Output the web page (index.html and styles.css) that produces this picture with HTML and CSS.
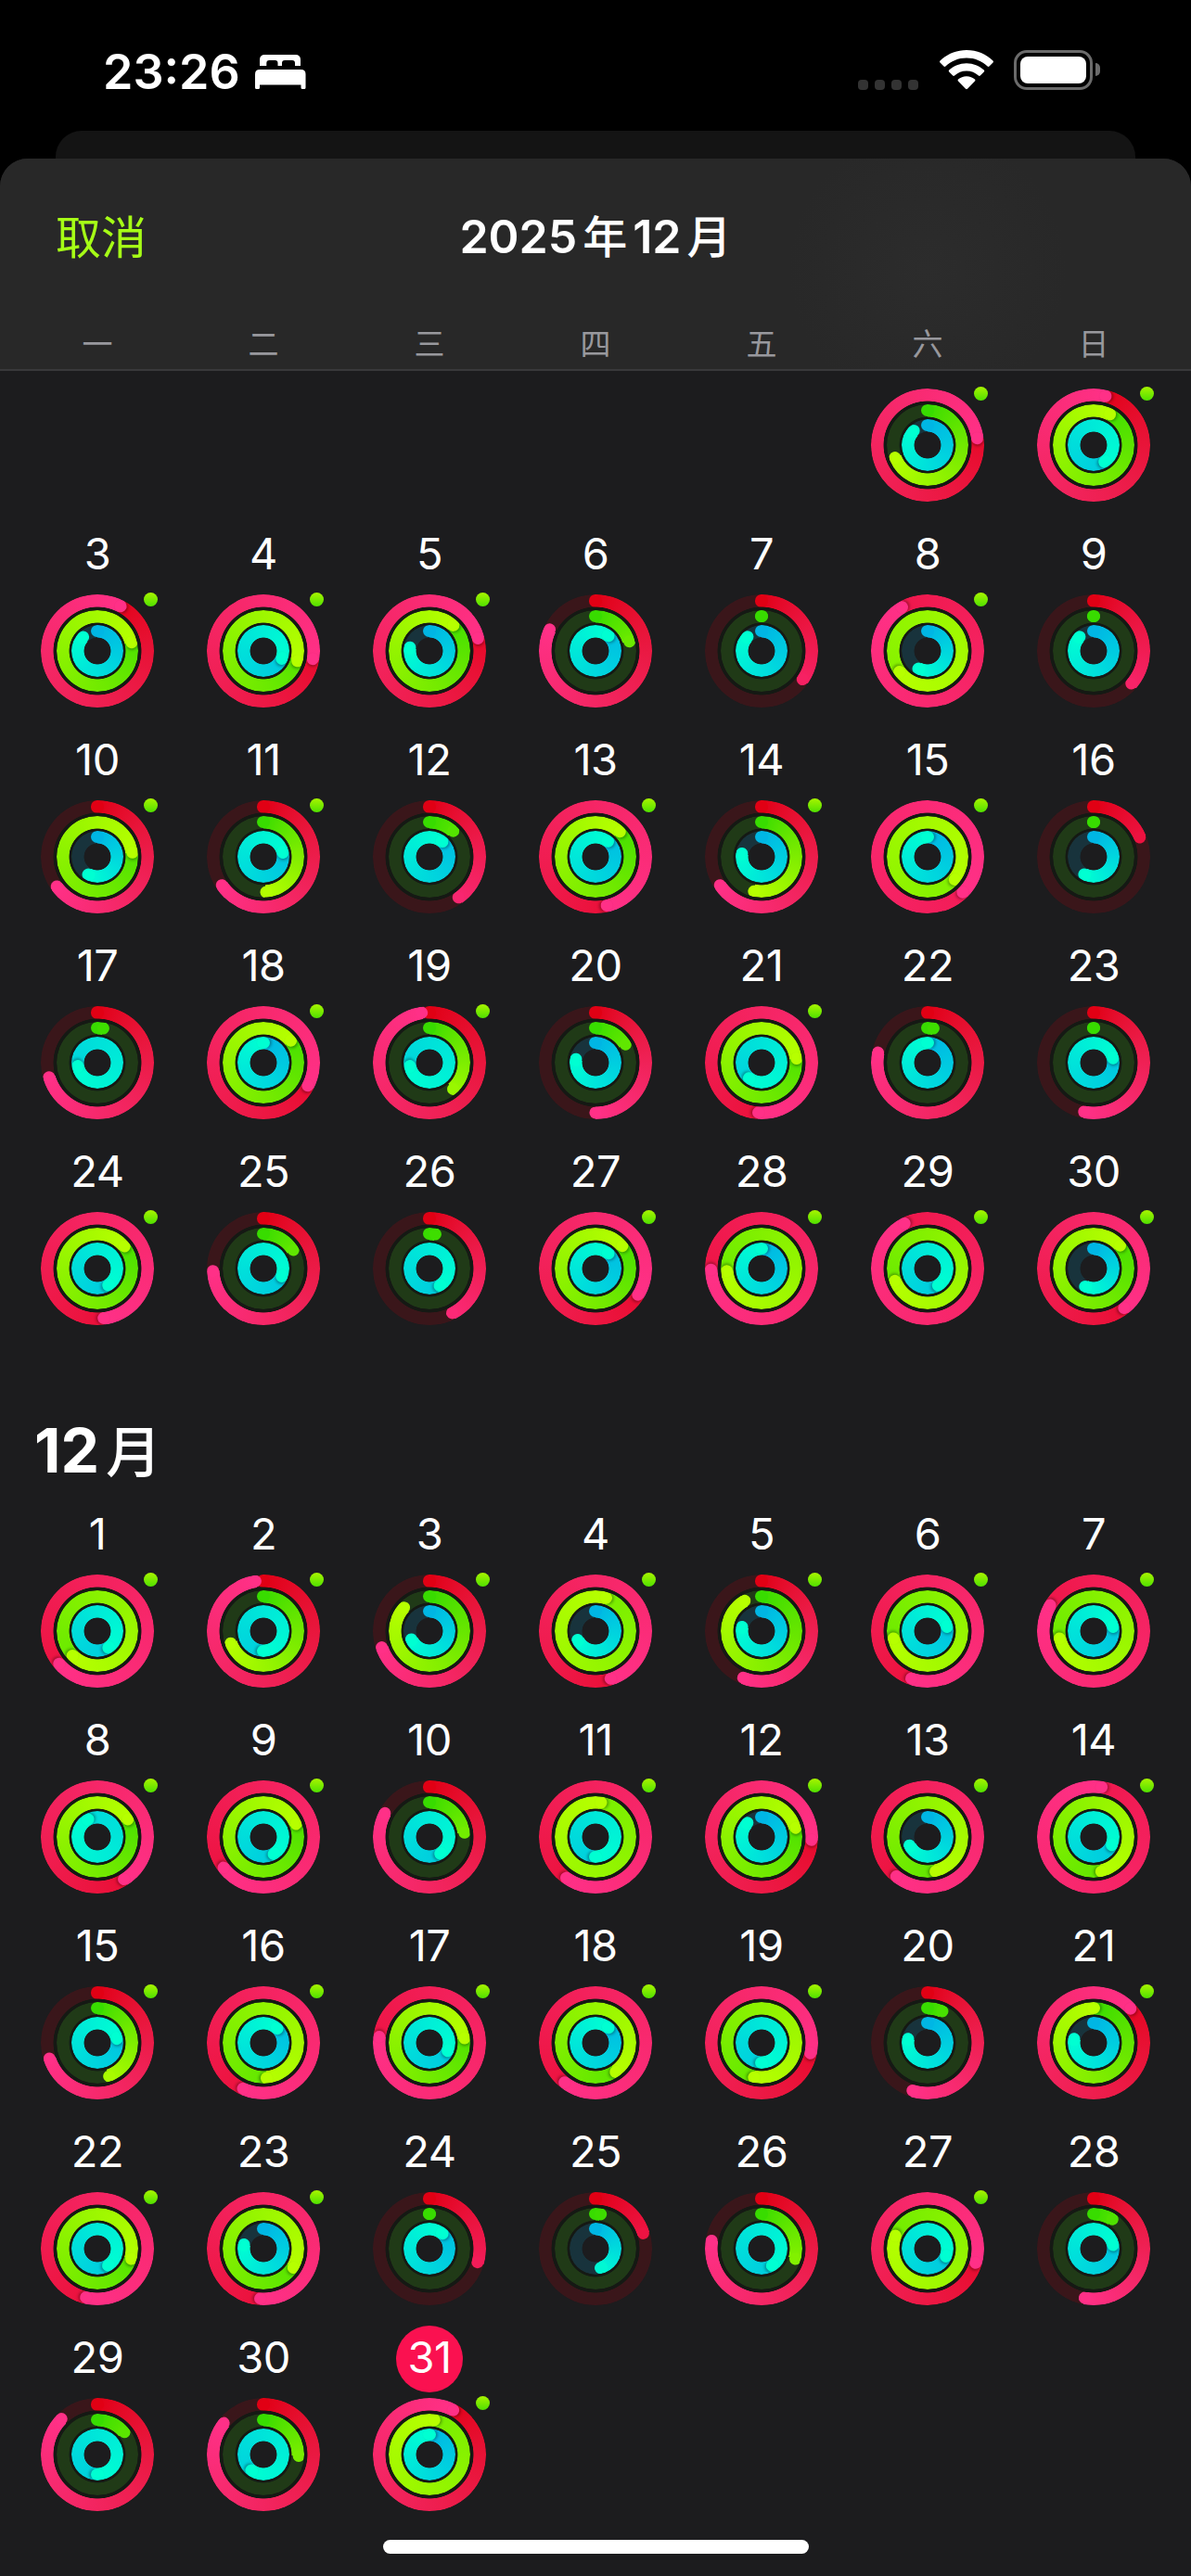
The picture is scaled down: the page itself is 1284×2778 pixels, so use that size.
FILE: index.html
```html
<!DOCTYPE html>
<html lang="zh-CN">
<head>
    <meta charset="UTF-8">
    <meta name="viewport" content="width=device-width, initial-scale=1.0">
    <title>2025年12月</title>
    <link rel="stylesheet" href="styles.css">
</head>
<body>
    <div class="screen">
        <div class="status-bar">
            <div class="status-left">
                <span class="time">23:26</span>
                <svg class="bed" viewBox="0 0 55 37" width="55" height="37">
                    <path fill="#fff" d="M5 12V5.500Q5 0 10.500 0H43.500Q49 0 49 5.500V12H43V9Q43 6 40 6H32Q29 6 29 9V12H24.500V9Q24.500 6 21.500 6H15.300Q12.300 6 12.300 9V12Z"/>
                    <path fill="#fff" d="M0 21Q0 16 5 16H49.500Q54.500 16 54.500 21V35.500Q54.500 37 53 37H51Q49.500 37 49.500 35.500V32.500H5V35.500Q5 37 3.500 37H1.500Q0 37 0 35.500Z"/>
                </svg>
            </div>
            <div class="status-right">
                <div class="signal"><i></i><i></i><i></i><i></i></div>
                <svg class="wifi" viewBox="0 0 58 43" width="58" height="43">
                    <path fill="#fff" d="M29 0C40.200 0 50.400 4.400 57.500 11.600Q58.400 12.500 57.500 13.500L53.500 17.500Q52.600 18.400 51.600 17.500C45.700 11.900 37.800 8.500 29 8.500S12.300 11.900 6.400 17.500Q5.400 18.400 4.500 17.500L.500 13.500Q-.400 12.500 .500 11.600C7.600 4.400 17.800 0 29 0Z"/>
                    <path fill="#fff" d="M29 14.200C36.300 14.200 42.900 17 47.800 21.600Q48.800 22.600 47.800 23.600L43.800 27.600Q42.900 28.500 41.900 27.600C38.500 24.500 34 22.600 29 22.600S19.500 24.500 16.100 27.600Q15.100 28.500 14.200 27.600L10.200 23.600Q9.200 22.600 10.200 21.600C15.100 17 21.700 14.200 29 14.200Z"/>
                    <path fill="#fff" d="M29 28.200C32.500 28.200 35.600 29.500 38 31.600Q39 32.600 38 33.600L30 41.700Q29 42.600 28 41.700L20 33.600Q19 32.600 20 31.600C22.400 29.500 25.500 28.200 29 28.200Z"/>
                </svg>
                <div class="battery"><div class="battery-level"></div></div>
            </div>
        </div>
        <div class="back-card"></div>
        <div class="sheet">
            <div class="header">
                <div class="nav">
                    <span class="cancel">取消</span>
                    <h1 class="title">2025<b>年</b>12<b class="last">月</b></h1>
                </div>
                <div class="weekdays">
                    <span>一</span><span>二</span><span>三</span><span>四</span><span>五</span><span>六</span><span>日</span>
                </div>
            </div>
            <div class="month first" id="november"></div>
            <h2 class="month-title">12<b>月</b></h2>
            <div class="month" id="december"></div>
        </div>
        <div class="home-indicator"></div>
    </div>

    <script src="rings.js"></script>
</body>
</html>
```

FILE: styles.css
```css
* {
    box-sizing: border-box;
}
body {
    margin: 0;
    background-color: #000;
    color: #fff;
    font-family: Inter, "Noto Sans CJK SC", sans-serif;
}
.screen {
    position: relative;
    display: flex;
    flex-direction: column;
    width: 1284px;
    height: 2778px;
    overflow: hidden;
}

/* Status bar */
.status-bar {
    display: flex;
    justify-content: space-between;
    align-items: center;
    height: 141px;
    padding: 13px 97px 0 111px;
}
.status-left {
    display: flex;
    align-items: center;
    gap: 17px;
}
.time {
    width: 147px;
    font-size: 52px;
    font-weight: 600;
    white-space: nowrap;
}
.status-right {
    display: flex;
    align-items: flex-end;
    height: 43px;
    margin-bottom: 3px;
}
.signal {
    display: flex;
    gap: 7px;
    margin-right: 23px;
}
.signal i {
    width: 11px;
    height: 11px;
    border-radius: 4px;
    background-color: #333;
}
.wifi {
    margin-right: 22px;
}
.battery {
    position: relative;
    width: 85px;
    height: 43px;
    margin-right: 9px;
    padding: 4px;
    border: 3px solid #6b6b6b;
    border-radius: 14px;
}
.battery::after {
    content: "";
    position: absolute;
    left: 85px;
    top: 11px;
    width: 5px;
    height: 14px;
    border-radius: 0 5px 5px 0;
    background-color: #6b6b6b;
}
.battery-level {
    height: 100%;
    border-radius: 8px;
    background-color: #fff;
}

/* Sheet */
.back-card {
    height: 30px;
    margin: 0 60px;
    border-radius: 28px 28px 0 0;
    background-color: #141414;
}
.sheet {
    flex: 1;
    border-radius: 30px 30px 0 0;
    background-color: #1c1c1e;
    overflow: hidden;
}
.header {
    height: 229px;
    border-bottom: 2px solid #39393b;
    background: radial-gradient(circle at 1000px 120px, #2c2c2c 0, #282828 150px);
}
.nav {
    display: grid;
    grid-template-columns: 1fr auto 1fr;
    align-items: center;
    height: 168px;
    padding: 0 60px;
}
.cancel {
    padding-bottom: 6px;
    color: #a6ff16;
    font-size: 49px;
}
.title {
    margin: 0;
    font-size: 50px;
    font-weight: 600;
    line-height: 60px;
    white-space: nowrap;
}
.title b {
    margin: 0 6px;
    font-size: 48px;
    font-weight: 500;
}
.title .last {
    margin-right: 0;
}
.weekdays {
    display: grid;
    grid-template-columns: repeat(7, 179px);
    justify-content: center;
    height: 60px;
    line-height: 65px;
    color: #98989d;
    font-size: 33px;
    text-align: center;
}

/* Months */
.month {
    display: grid;
    grid-template-columns: repeat(7, 179px);
    justify-content: center;
    row-gap: 22px;
}
.first {
    padding-top: 19px;
}
.month-title {
    height: 80px;
    margin: 95px 37px 16px;
    font-size: 66px;
    font-weight: 700;
    line-height: 80px;
}
.month-title b {
    margin-left: 7px;
    font-size: 60px;
    font-weight: 500;
    line-height: 1;
}
.day {
    display: flex;
    flex-direction: column;
    align-items: center;
    gap: 6px;
}
.day-number {
    width: 72px;
    height: 72px;
    font-size: 47px;
    line-height: 68px;
    letter-spacing: -0.5px;
    text-align: center;
}
.today {
    border-radius: 50%;
    background-color: #fa1150;
}

/* Activity rings */
.rings {
    position: relative;
    width: 122px;
    height: 122px;
    background: radial-gradient(circle, transparent 22px, #151914 23px, #151914 50px, transparent 51px);
}
.ring {
    position: absolute;
    inset: var(--inset);
    border-radius: 50%;
    overflow: hidden;
    -webkit-mask: radial-gradient(closest-side, transparent calc(100% - 13.9px), #000 calc(100% - 13.2px));
    mask: radial-gradient(closest-side, transparent calc(100% - 13.9px), #000 calc(100% - 13.2px));
}
.move {
    --inset: 0.3px;
    --start: #e10014;
    --end: #ff3087;
    --track: #3a161a;
}
.exercise {
    --inset: 16.7px;
    --start: #38dc00;
    --end: #b6ff00;
    --track: #203a17;
}
.stand {
    --inset: 33px;
    --start: #00b6e4;
    --end: #00ffd2;
    --track: #18333c;
}
.cap {
    position: absolute;
    inset: 0;
}
.cap::before {
    content: "";
    position: absolute;
    left: calc(50% - 6.7px);
    top: 0;
    width: 13.4px;
    height: 13.4px;
    border-radius: 50%;
    background-color: var(--color);
}
.over::before {
    box-shadow: 2px 0 3px rgba(0, 0, 0, 0.3);
}
.workout {
    position: absolute;
    left: 111px;
    top: -2px;
    width: 15px;
    height: 15px;
    border-radius: 50%;
    background: linear-gradient(#a8f400, #50e000);
}

.home-indicator {
    position: absolute;
    left: 413px;
    bottom: 24px;
    width: 459px;
    height: 15px;
    border-radius: 8px;
    background-color: #fff;
}
```

FILE: rings.js
```js
// [day, move, exercise, stand, workout] - 1 is a closed ring
const november = [
    [1, 1.23, 0.692, 0.875, 1], [2, 1.04, 1.075, 1.405, 1],
    [3, 1.078, 1.208, 0.87, 1], [4, 1.277, 1.294, 1.31, 1], [5, 1.211, 1.117, 0.775, 1], [6, 0.82, 0.204, 1.11, 0], [7, 0.347, 0, 0.873, 0], [8, 1.917, 2.65, 0.573, 1], [9, 0.364, 0, 0.873, 0],
    [10, 0.649, 1.228, 0.573, 1], [11, 0.654, 0.488, 1.212, 1], [12, 0.402, 0.116, 1.108, 0], [13, 1.464, 1.12, 1.105, 1], [14, 0.654, 0.535, 0.773, 1], [15, 2.376, 2.36, 1, 1], [16, 0.188, 0, 0.574, 0],
    [17, 0.703, 0.025, 1.72, 0], [18, 1.327, 1.14, 1, 1], [19, 0.977, 0.383, 1.72, 1], [20, 0.5, 0.16, 0.775, 0], [21, 1.51, 1.229, 1.605, 1], [22, 0.782, 0.025, 1, 0], [23, 0.53, 0, 1.21, 0],
    [24, 1.48, 1.138, 1.405, 1], [25, 0.742, 0.159, 1.31, 0], [26, 0.425, 0.025, 1.41, 0], [27, 1.339, 1.136, 1.11, 1], [28, 1.746, 1.739, 1, 1], [29, 1.926, 1.693, 1.408, 1], [30, 1.396, 1.134, 0.566, 1]
];
const december = [
    [1, 1.637, 1.627, 1.403, 1], [2, 0.976, 0.694, 1.5, 1], [3, 0.697, 0.868, 0.678, 1], [4, 1.451, 2.047, 0.673, 1], [5, 0.559, 0.918, 0.78, 1], [6, 1.552, 1.717, 1.212, 1], [7, 1.836, 1.717, 1.212, 1],
    [8, 1.411, 1.164, 1.92, 1], [9, 1.645, 1.187, 1.41, 1], [10, 0.828, 0.228, 1.405, 0], [11, 1.598, 2.023, 1.5, 1], [12, 1.261, 1.206, 0.872, 1], [13, 1.606, 1.464, 0.676, 1], [14, 2.027, 1.465, 1.313, 1],
    [15, 0.699, 0.446, 1.214, 1], [16, 1.566, 1.486, 1.12, 1], [17, 1.769, 1.227, 1.313, 1], [18, 1.605, 1.403, 1.11, 1], [19, 1.285, 1.535, 1.5, 1], [20, 0.548, 0.067, 0.778, 0], [21, 1.133, 1, 0.778, 1],
    [22, 1.536, 1.295, 1.406, 1], [23, 1.51, 1.339, 0.78, 1], [24, 0.295, 0, 1.11, 0], [25, 0.202, 0.022, 0.455, 0], [26, 0.775, 0.295, 1.408, 0], [27, 1.297, 1.811, 1.31, 1], [28, 0.528, 0.088, 1.217, 0],
    [29, 0.875, 0.137, 1.5, 0], [30, 0.857, 0.254, 1.6, 0], [31, 1.08, 2.02, 1, 1]
];

function mix(amount) {
    return `color-mix(in srgb, var(--end) ${Math.round(amount * 100)}%, var(--start))`;
}

function cap(turn, color, over) {
    return `<div class="cap${over ? ' over' : ''}" style="transform: rotate(${(turn * 360).toFixed(1)}deg); --color: ${color}"></div>`;
}

function ring(name, value) {
    const tip = value * 360;
    if (value >= 1) {
        // The gradient runs over all laps, only the last lap is visible
        const from = mix((value - 1) / value);
        return `<div class="ring ${name}" style="background: conic-gradient(from ${tip % 360}deg, ${from}, var(--end))">
            ${cap(value % 1, 'var(--end)', true)}</div>`;
    }
    const end = mix(Math.min(1, value * 2));
    return `<div class="ring ${name}" style="background: conic-gradient(var(--start), ${end} ${tip}deg, var(--track) ${tip}deg)">
        ${cap(0, 'var(--start)')}${cap(value, end)}</div>`;
}

function renderMonth(id, days, offset, today) {
    document.getElementById(id).innerHTML = days.map(([day, move, exercise, stand, workout], i) => {
        // The first weekend is scrolled up, its numbers are behind the header
        const number = i < offset ? '' : `<div class="day-number${day === today ? ' today' : ''}">${day}</div>`;
        const column = i === 0 && offset ? ' style="grid-column: 6"' : '';
        return `<div class="day"${column}>${number}
            <div class="rings">
                ${ring('move', move)}${ring('exercise', exercise)}${ring('stand', stand)}
                ${workout ? '<div class="workout"></div>' : ''}
            </div>
        </div>`;
    }).join('');
}

renderMonth('november', november, 2);
renderMonth('december', december, 0, 31);
```
